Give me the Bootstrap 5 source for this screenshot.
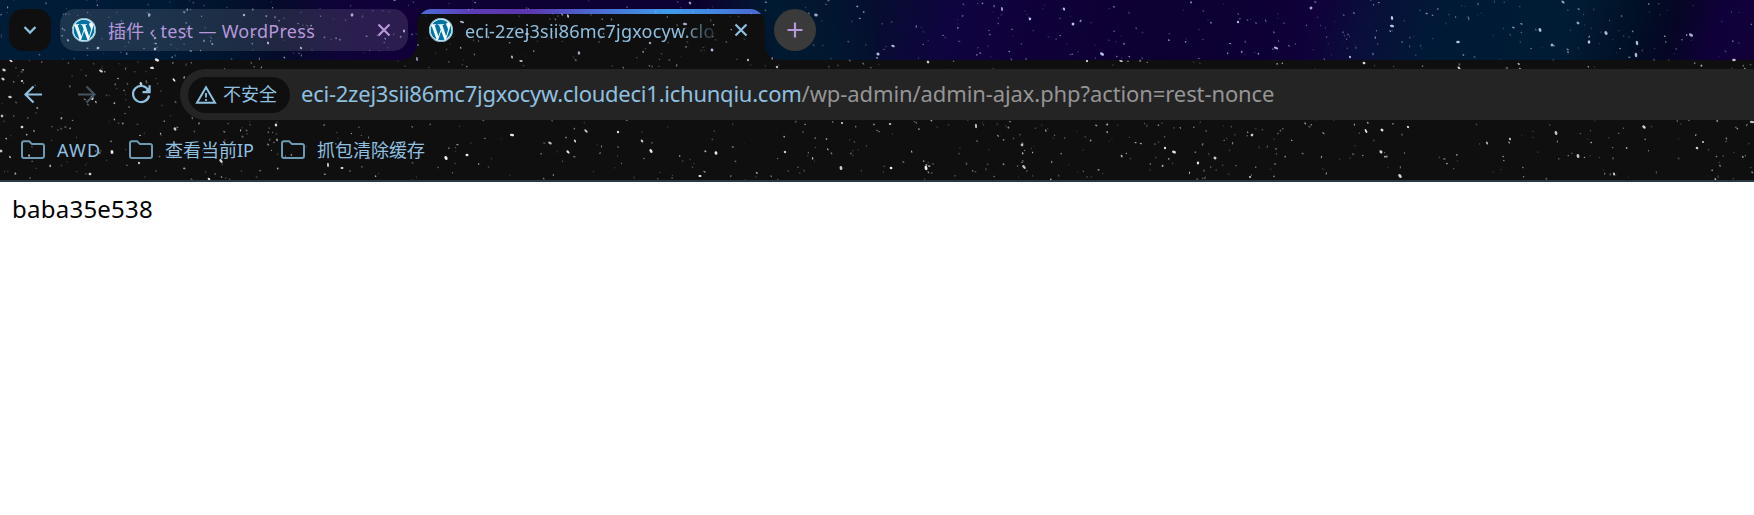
<!DOCTYPE html>
<html lang="zh-CN">
<head>
<meta charset="utf-8">
<meta name="viewport" content="width=device-width, initial-scale=1">
<title>baba35e538</title>
<link href="https://cdn.jsdelivr.net/npm/bootstrap@5.3.0/dist/css/bootstrap.min.css" rel="stylesheet">
<style>
  body { font-family: "Noto Sans", "Noto Sans CJK SC", sans-serif; background: #fff; color: #000; }
  .browser-top { height: 182px; background: #0f0f0f; border-bottom: 2px solid #2b3a42; isolation: isolate; color: #8fc0e0; }
  .starfield { inset: 0; width: 100%; height: 180px; z-index: 1; pointer-events: none; }
  .above { position: relative; z-index: 2; }
  .tab-strip { height: 60px; padding: 9px 0 0 9px;
    background:
      linear-gradient(80deg, #001d38 0, #001a36 18%, #01142e 26%, #050b2a 32%, #0f0338 39%, #12003a 44%, #0d0030 54%, #0d0030 80%, #001a30 88%, #011730 94%, #060d30 100%) 0 0 / 877px 60px no-repeat,
      linear-gradient(105deg, #060d30 0, #0f0440 9%, #10003a 18%, #0d0030 32%, #0e0034 45%, #10003a 49%, #09103a 56%, #001a36 64%, #001b33 79%, #010f24 86%, #060624 90%, #10003a 95%, #120038 100%) 877px 0 / 877px 60px no-repeat; }
  .menu-btn { width: 42px; height: 42px; border-radius: 14px; background: #0f0f0f; }
  .tab-idle { width: 348px; height: 42px; margin-left: 9px; border-radius: 15px; background: rgba(255,255,255,.115); color: #b797db; }
  .tab-open { width: 348px; height: 51px; margin-left: 9px; background: #0f0f0f; border-radius: 15px 15px 0 0; }
  .tab-stripe { inset: 0 0 auto 0; height: 15px; border-radius: 15px 15px 0 0; overflow: hidden; }
  .tab-stripe::before { content: ""; display: block; height: 4.5px; background: linear-gradient(90deg, #4d6fdc 0, #5c3cb4 55px, #5b36ac 110px, #4a68d0 175px, #3f9be8 250px, #4285e0 300px, #4b62d0 348px); }
  .tab-open::before, .tab-open::after { content: ""; position: absolute; bottom: 0; width: 15px; height: 15px; }
  .tab-open::before { left: -15px; background: radial-gradient(circle at 0 0, transparent 14.5px, #0f0f0f 15px); }
  .tab-open::after { right: -15px; background: radial-gradient(circle at 100% 0, transparent 14.5px, #0f0f0f 15px); }
  .tab-inner { height: 42px; padding: 0 17px 0 12px; }
  .tab-label { font-size: 18px; line-height: 40px; padding-top: 2px; margin-left: 12px; white-space: nowrap; }
  .tab-idle .tab-label { letter-spacing: .3px; }
  .tab-open .tab-label { letter-spacing: .22px; width: 255px; -webkit-mask-image: linear-gradient(90deg, #000 215px, transparent 256px); mask-image: linear-gradient(90deg, #000 215px, transparent 256px); }
  .plus-btn { width: 42px; height: 42px; margin-left: 9px; background: #3a3a3a; }
  .tool-row { height: 60px; padding-top: 9px; }
  .nav-icons { width: 180px; height: 51px; padding-left: 21px; gap: 30px; }
  .omnibox { height: 51px; background: #242424; border-radius: 26px 0 0 26px; padding-left: 8px; }
  .chip { width: 102px; height: 36px; background: #0f0f0f; border-radius: 18px; padding-left: 7px; font-size: 18px; gap: 6px; }
  .url { margin-left: 11px; font-size: 22px; line-height: 36px; margin-bottom: 4px; white-space: nowrap; }
  .url-host { letter-spacing: -.24px; }
  .url-path { color: #959595; letter-spacing: -.1px; }
  .bookmarks { height: 60px; padding-left: 21px; font-size: 18px; }
  .bookmarks .folder { height: 60px; gap: 12px; white-space: nowrap; }
  .folder svg { color: #6d9ab2; }
  .folder span { padding-top: 1px; }
  .latin { letter-spacing: 1.2px; }
  .page-body { padding: 8px 12px; font-size: 24px; line-height: 37px; letter-spacing: .24px; }
  svg { flex: none; }
</style>
</head>
<body>
<svg width="0" height="0" class="position-absolute">
  <symbol id="wp" viewBox="0 0 16 16">
    <circle cx="8" cy="8" r="8" fill="#f4fbff"/>
    <g fill="#0073a3">
      <path d="M12.633 7.653c0-.848-.305-1.435-.566-1.892l-.08-.13c-.317-.51-.594-.958-.594-1.48 0-.63.478-1.218 1.152-1.218q.03 0 .058.003l.031.003A6.84 6.84 0 0 0 8 1.137 6.86 6.86 0 0 0 2.266 4.23c.16.005.313.009.442.009.717 0 1.828-.087 1.828-.087.37-.022.414.521.044.565 0 0-.371.044-.785.065l2.5 7.434 1.5-4.506-1.07-2.929c-.369-.022-.719-.065-.719-.065-.37-.022-.326-.588.043-.566 0 0 1.134.087 1.808.087.718 0 1.83-.087 1.83-.087.37-.022.413.522.043.566 0 0-.372.043-.785.065l2.48 7.377.684-2.287.054-.173c.27-.86.469-1.495.469-2.046zM1.137 8a6.86 6.86 0 0 0 3.868 6.176L1.73 5.206A6.8 6.8 0 0 0 1.137 8"/>
      <path d="M6.061 14.583 8.121 8.6l2.109 5.78q.02.05.049.094a6.85 6.85 0 0 1-4.218.109m7.96-9.876q.046.328.047.706c0 .696-.13 1.479-.522 2.458l-2.096 6.06a6.86 6.86 0 0 0 2.572-9.224z"/>
      <circle cx="8" cy="8" r="7.7" fill="none" stroke="#4d9fc0" stroke-width=".5"/>
    </g>
  </symbol>
  <symbol id="cross" viewBox="0 0 14 14"><path d="M1.500 1.500l11 11M12.500 1.500l-11 11" fill="none" stroke="currentColor" stroke-width="2.200"/></symbol>
  <symbol id="folder" viewBox="0 0 24 20"><path d="M1 3.200Q1 1.200 3 1.200H8.200L11 4.100H21Q23 4.100 23 6.100V16Q23 18 21 18H3Q1 18 1 16Z" fill="none" stroke="currentColor" stroke-width="2"/></symbol>
</svg>

<header class="browser-top position-relative overflow-hidden">
  <svg class="starfield position-absolute" id="stars"></svg>

  <div class="tab-strip d-flex">
    <div class="menu-btn above d-flex align-items-center justify-content-center">
      <svg width="14" height="10" viewBox="0 0 14 10"><path d="M1.500 2l5.500 5.500L12.500 2" fill="none" stroke="currentColor" stroke-width="2.300"/></svg>
    </div>
    <div class="tab-idle">
      <div class="tab-inner above d-flex align-items-center">
        <svg width="24" height="24"><use href="#wp"/></svg>
        <span class="tab-label">插件 ‹ test — WordPress</span>
        <svg class="ms-auto" width="14" height="14"><use href="#cross"/></svg>
      </div>
    </div>
    <div class="tab-open position-relative">
      <div class="tab-stripe position-absolute"></div>
      <div class="tab-inner above d-flex align-items-center">
        <svg width="24" height="24"><use href="#wp"/></svg>
        <span class="tab-label">eci-2zej3sii86mc7jgxocyw.clo</span>
        <svg class="ms-auto" width="14" height="14"><use href="#cross"/></svg>
      </div>
    </div>
    <div class="plus-btn above rounded-circle d-flex align-items-center justify-content-center">
      <svg width="16" height="16" viewBox="0 0 16 16"><path d="M8 .5v15M.5 8h15" fill="none" stroke="#b797db" stroke-width="2.200"/></svg>
    </div>
  </div>

  <div class="tool-row d-flex">
    <div class="nav-icons above d-flex align-items-center">
      <svg width="24" height="24" viewBox="0 0 24 24"><path d="M21 11.500H5M12.500 3.500l-8 8 8 8" fill="none" stroke="currentColor" stroke-width="2.200"/></svg>
      <svg width="24" height="24" viewBox="0 0 24 24"><path d="M3 11.500h16M11.500 3.500l8 8-8 8" fill="none" stroke="#435662" stroke-width="2.200"/></svg>
      <svg width="24" height="24" viewBox="0 0 24 24"><path d="M19.300 7.200A8.100 8.100 0 1 0 20.100 12.500M20.600 2.200v6.900H13.500" fill="none" stroke="currentColor" stroke-width="2.200"/><path d="M16 8.500l4-4v4.500z" fill="currentColor"/></svg>
    </div>
    <div class="omnibox above flex-grow-1 d-flex align-items-center">
      <div class="chip d-flex align-items-center">
        <svg width="22" height="20" viewBox="0 0 22 20"><path d="M11 2.200L20 17.700H2Z" fill="none" stroke="currentColor" stroke-width="2"/><path d="M11 8v4.500M11 14v2" stroke="currentColor" stroke-width="1.800"/></svg>
        <span>不安全</span>
      </div>
      <div class="url"><span class="url-host">eci-2zej3sii86mc7jgxocyw.cloudeci1.ichunqiu.com</span><span class="url-path">/wp-admin/admin-ajax.php?action=rest-nonce</span></div>
    </div>
  </div>

  <nav class="bookmarks above d-flex">
    <div class="folder d-flex align-items-center" style="width:108px"><svg width="24" height="20"><use href="#folder"/></svg><span class="latin">AWD</span></div>
    <div class="folder d-flex align-items-center" style="width:152px"><svg width="24" height="20"><use href="#folder"/></svg><span>查看当前IP</span></div>
    <div class="folder d-flex align-items-center"><svg width="24" height="20"><use href="#folder"/></svg><span>抓包清除缓存</span></div>
  </nav>
</header>

<main class="page-body"><span id="nonce">baba35e538</span></main>

<script src="https://cdn.jsdelivr.net/npm/bootstrap@5.3.0/dist/js/bootstrap.bundle.min.js"></script>
<script>
  // Theme starfield: a set of bright stars plus a seeded scatter of faint ones.
  const field = document.getElementById('stars');
  const bright = [[149,15],[155,38],[155,49],[157,60],[98,48],[352,15],[244,15],[268,43],[3,79],[4,70],[22,81],[11,61],[101,71],[174,80],[152,68],[141,84],[92,98],[10,97],[301,48],[404,31],[417,59],[462,22],[512,57],[521,61],[579,53],[527,34],[568,16],[650,43],[685,24],[690,3],[712,50],[777,67],[748,60],[816,15],[1002,9],[1030,19],[1073,24],[1102,54],[1087,61],[1064,9],[893,46],[878,54],[928,62],[1121,61],[1238,22],[1276,48],[1311,8],[1392,18],[1392,26],[1458,42],[1350,57],[1364,63],[1540,30],[1563,2],[1578,23],[1589,42],[1552,45],[1606,33],[1637,43],[1636,55],[1691,35],[1734,60],[1459,68],[890,124],[842,123],[976,126],[1022,145],[1024,167],[891,168],[926,168],[1165,148],[1174,152],[1198,163],[1215,158],[1252,135],[1250,177],[1382,130],[1366,131],[1381,152],[1408,127],[1510,139],[1556,133],[1487,143],[1578,156],[1644,127],[1614,174],[1400,176],[1697,148],[1703,142],[1752,122],[586,131],[575,141],[618,132],[642,141],[550,143],[568,152],[467,155],[446,158],[651,151],[716,153],[785,152],[841,168],[700,176],[512,135],[1,151],[112,152],[276,125],[175,129],[22,127],[139,163],[221,161],[328,165],[342,168],[209,179],[2,116],[90,174]];
  let seed = 91573;
  const rnd = () => (seed = (seed * 16807) % 2147483647) / 2147483647;
  let out = '';
  const star = (x, y, rx, ry, a, turn) => {
    out += `<ellipse cx="${x.toFixed(1)}" cy="${y.toFixed(1)}" rx="${rx.toFixed(2)}" ry="${ry.toFixed(2)}" fill="${y < 60 ? '#c4cdf0' : '#f4f4f4'}" opacity="${a.toFixed(2)}" transform="rotate(${turn} ${x.toFixed(1)} ${y.toFixed(1)})"/>`;
  };
  for (const [x, y] of bright) star(x, y, 1.1 + rnd() * 1.2, .9 + rnd() * .6, .75 + rnd() * .25, Math.round(rnd() * 90));
  for (let i = 0; i < 1400; i++) star(rnd() * 1754, rnd() * 180, .55 + rnd() * .85, .5 + rnd() * .45, .15 + Math.pow(rnd(), 1.6) * .6, Math.round(rnd() * 120));
  field.innerHTML = out;
</script>
</body>
</html>
